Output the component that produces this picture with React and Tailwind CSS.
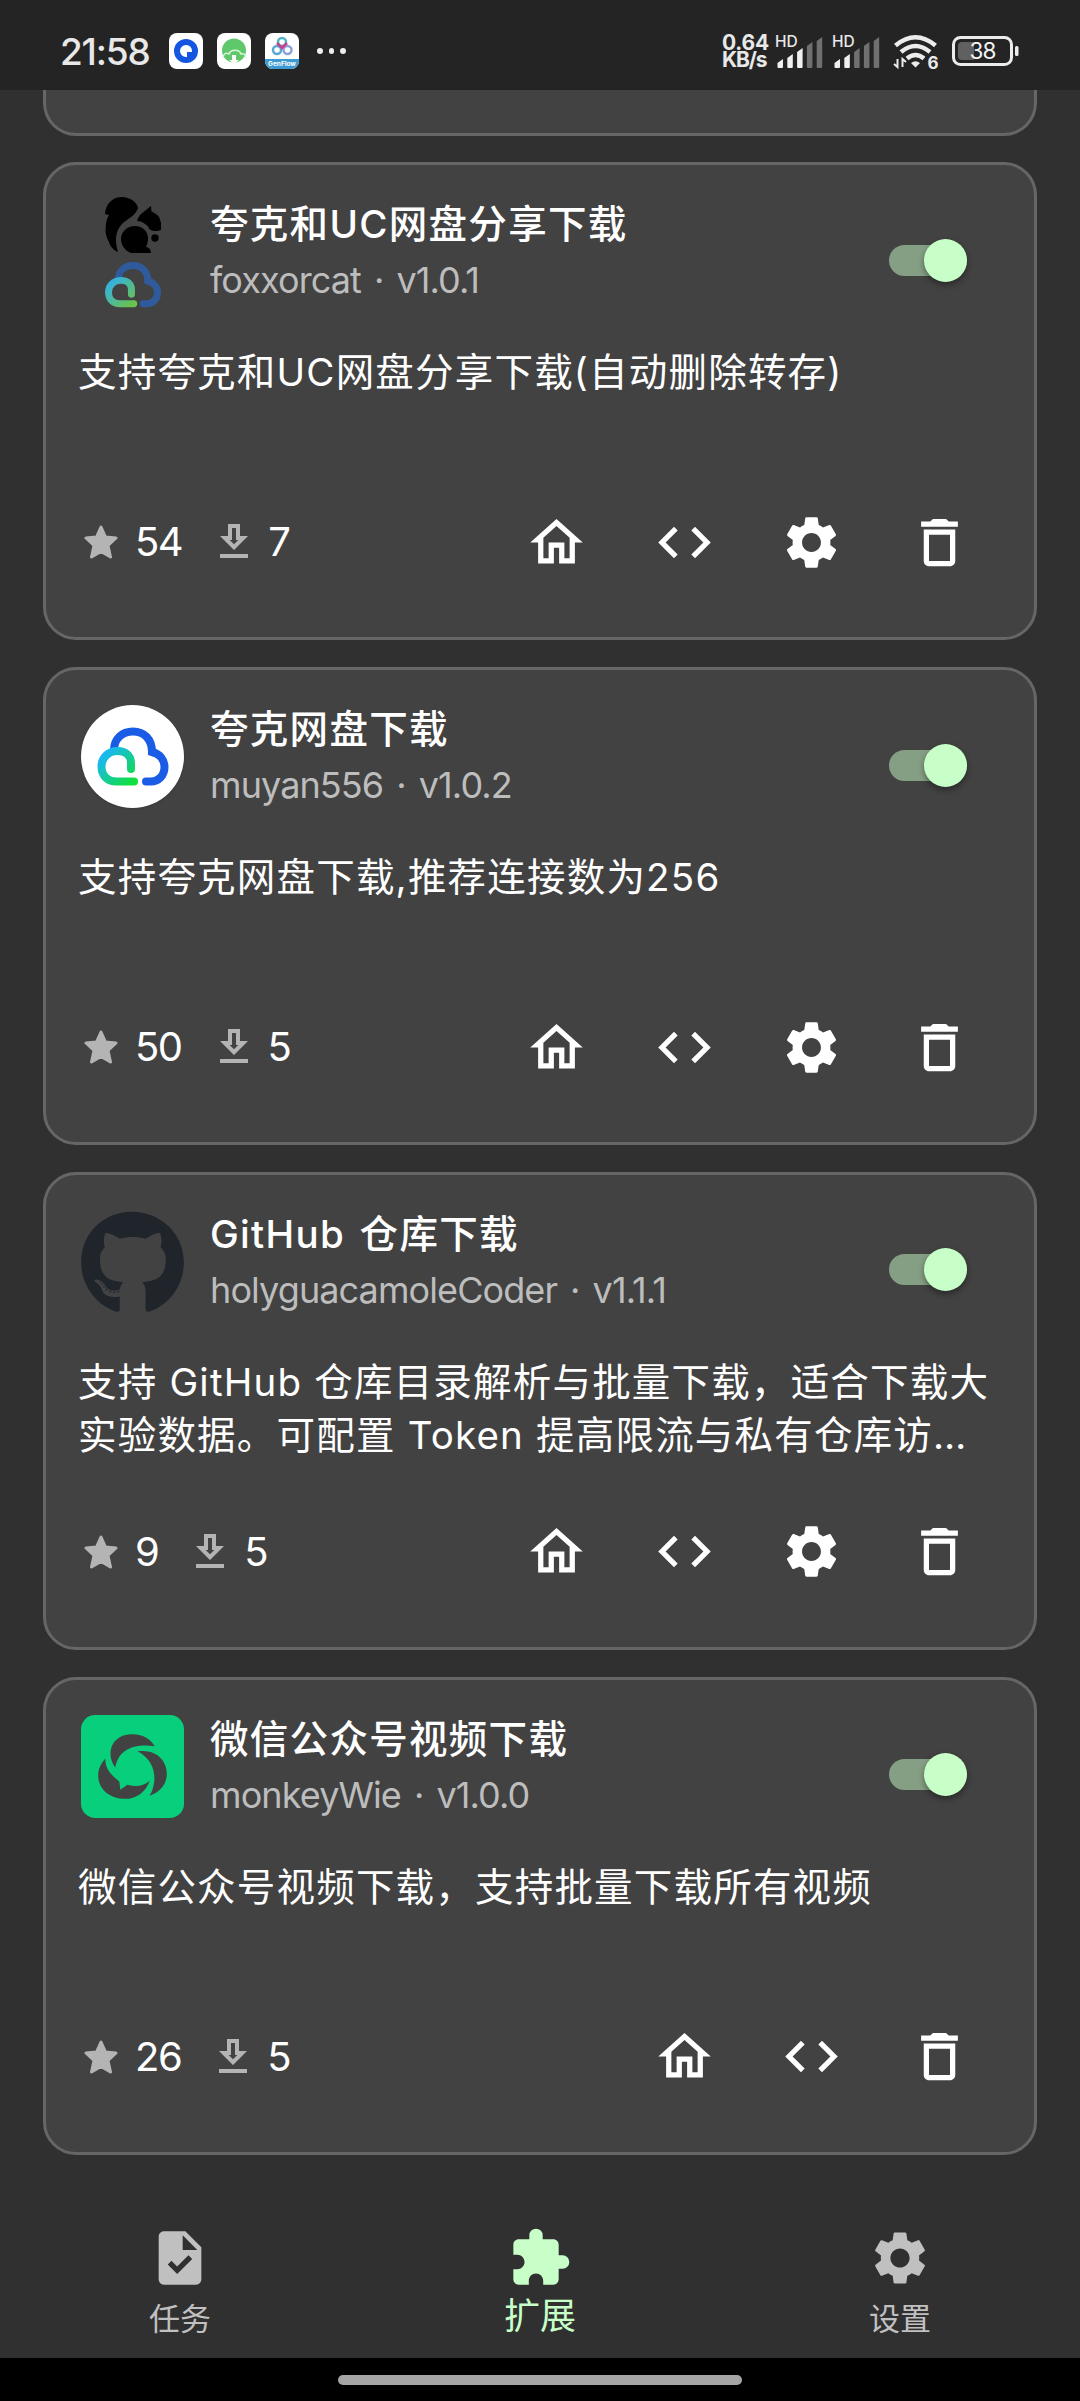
import clsx from "clsx";
import { MdCode, MdExtension, MdOutlineDelete, MdOutlineHome, MdSettings, MdTask } from "react-icons/md";
import { FaGithub } from "react-icons/fa";

const CloudMark = ({ className, blue = "#1a5ce6", cyan = "#18b8f2", green = "#10e03c", stroke = 8, id }) => (
  <svg viewBox="0 0 72 60" preserveAspectRatio="none" className={className} fill="none" strokeLinecap="round">
    <defs>
      <linearGradient id={id} x1="0" y1="0" x2="1" y2="1">
        <stop offset="0.1" stopColor={cyan} />
        <stop offset="1" stopColor={green} />
      </linearGradient>
    </defs>
    <path
      d="M17 23C17 12 25 4.5 36 4.5C47 4.5 55 12 55 25C63 27 67.500 33 67.500 40C67.500 49 61 54.500 54 54.500H49"
      stroke={blue}
      strokeWidth={stroke}
    />
    <path
      d="M34 42V36C34 28 28 24 20.500 24C11 24 4.500 31 4.500 39.500C4.500 49 11 54.500 19 54.500H37"
      stroke={`url(#${id})`}
      strokeWidth={stroke}
    />
  </svg>
);

const QuarkUcAvatar = () => (
  <div className="flex h-full flex-col items-center">
    <svg viewBox="0 0 56 56" className="-mt-[3px] h-14 w-14 shrink-0">
      <path d="M0 17C1 6 8 0 17 0C25 0 32 5 33 11C31 17 26 20 22 23C14 28 11 35 11 43C11 48 12 52 13 55C8 53 5 49 4 45C1 40 0 35 .7 30C1 25 2 21 4 18Z" />
      <path d="M46 9L46.500 14.500C52 17 55 20 55 23C57 27 56.500 30 56 33C51 35 47 34 44 32C44 30 42 28 40 27C38 25 35 24 32 24C33 21 34 19 36 17Z" />
      <path d="M30 29C38 29 43 35 43 41C43 45 42 48 41 50C43 50 46 52 46 56H26C20 54 16 48 16 42C16 35 22 29 30 29Z" />
      <circle cx="50" cy="41" r="3.700" />
    </svg>
    <CloudMark
      id="uc"
      className="mt-[9px] h-[46px] w-14 shrink-0"
      blue="#2f5b9c"
      cyan="#35b2dc"
      green="#6cc24a"
      stroke={9}
    />
  </div>
);

const QuarkAvatar = () => (
  <div className="flex h-full w-full items-center justify-center rounded-full bg-white shadow">
    <CloudMark id="quark" className="h-[60px] w-[72px]" />
  </div>
);

const GithubAvatar = () => <FaGithub className="h-[106px] w-[103px] text-[#20252c]" />;

const WechatAvatar = () => (
  <svg viewBox="0 0 102 102" className="h-full w-full">
    <rect width="102" height="102" rx="14" fill="#07cf7c" />
    <g fill="#424242">
      <path d="M34 52C24 38 30 19 51 19C62 19 69 24 73 31C53 28 37 34 34 52Z" />
      <path d="M56 36C74 33 85 45 85 58C85 68 79 76 68 80C76 66 75 46 56 36Z" />
      <path d="M24 43C24 54 30 59 38 66L39 74L46 69C54 71 61 71 68 65C64 77 54 83 44 83C28 83 17 73 17 60C17 53 20 48 24 43Z" />
    </g>
  </svg>
);

const extensions = [
  {
    title: "夸克和UC网盘分享下载",
    author: "foxxorcat",
    version: "v1.0.1",
    description: "支持夸克和UC网盘分享下载(自动删除转存)",
    stars: 54,
    installs: 7,
    avatar: QuarkUcAvatar,
    configurable: true,
  },
  {
    title: "夸克网盘下载",
    author: "muyan556",
    version: "v1.0.2",
    description: "支持夸克网盘下载,推荐连接数为256",
    stars: 50,
    installs: 5,
    avatar: QuarkAvatar,
    configurable: true,
  },
  {
    title: "GitHub 仓库下载",
    author: "holyguacamoleCoder",
    version: "v1.1.1",
    description:
      "支持 GitHub 仓库目录解析与批量下载，适合下载大实验数据。可配置 Token 提高限流与私有仓库访…",
    stars: 9,
    installs: 5,
    avatar: GithubAvatar,
    configurable: true,
  },
  {
    title: "微信公众号视频下载",
    author: "monkeyWie",
    version: "v1.0.0",
    description: "微信公众号视频下载，支持批量下载所有视频",
    stars: 26,
    installs: 5,
    avatar: WechatAvatar,
    configurable: false,
  },
];

const tabs = [
  { label: "任务", icon: MdTask },
  { label: "扩展", icon: MdExtension, active: true },
  { label: "设置", icon: MdSettings },
];

const Signal = ({ level }) => (
  <svg viewBox="0 0 48 36" className="h-9 w-12 overflow-visible">
    <text x="-1" y="14" fontSize="15.500" fontWeight="500" fill="#e8e8e8">
      HD
    </text>
    {[8, 13, 19, 25, 30].map((h, i) => (
      <path
        key={h}
        d={`M${1.5 + i * 9.8} ${38 - h}l5.500 -4v${h}q0 1-1 1h-3.500q-1 0-1-1z`}
        fill={i < level ? "#f0f0f0" : "#707070"}
      />
    ))}
  </svg>
);

const StatusBar = () => (
  <header className="flex h-[90px] shrink-0 items-center bg-[#242424] pt-3 pl-[60px] text-[#e8e8e8]">
    <span className="w-[109px] text-[37px] leading-none font-medium tracking-[-1.2px]">21:58</span>
    <svg viewBox="0 0 34 36" className="h-9 w-[34px]">
      <rect width="34" height="36" rx="8" fill="#fff" />
      <circle cx="17" cy="18" r="12" fill="#1556e0" />
      <path d="M17 12a6 6 0 1 0 0 12h1v-5h5a6 6 0 0 0-6-7z" fill="#fff" />
    </svg>
    <svg viewBox="0 0 34 36" className="ml-[14px] h-9 w-[34px]">
      <rect width="34" height="36" rx="8" fill="#fff" />
      <circle cx="17" cy="17.500" r="12" fill="#5fc86b" />
      <path d="M6 25c0-4 3-6 6-4c2-5 10-5 12 0c3-1 5 1 5 4" fill="none" stroke="#d8f5da" strokeWidth="1.500" />
      <path d="M15 22h4v5h3l-5 4-5-4h3z" fill="#fff" />
    </svg>
    <svg viewBox="0 0 34 36" className="ml-[14px] h-9 w-[34px]">
      <rect width="34" height="36" rx="8" fill="#fff" />
      <path d="M0 26h34v2a8 8 0 0 1-8 8H8a8 8 0 0 1-8-8z" fill="#3d9bd4" />
      <g fill="none" strokeWidth="2.500">
        <circle cx="17" cy="9" r="4" stroke="#4fb4c8" />
        <circle cx="12" cy="17" r="4" stroke="#5aa8d8" />
        <circle cx="22.500" cy="17" r="4" stroke="#8ba3dc" />
        <path d="M12 10l5 5 5-5" stroke="#c8408a" />
      </g>
      <text x="17" y="33" fontSize="6.500" fontWeight="700" fill="#fff" textAnchor="middle">
        GenFlow
      </text>
    </svg>
    <div className="ml-[18px] flex gap-[6px]">
      {[0, 1, 2].map((i) => (
        <span key={i} className="h-[5.500px] w-[5.500px] rounded-full bg-[#eee]" />
      ))}
    </div>
    <div className="ml-auto flex items-center pr-[61px]">
      <div className="w-[54px] text-[21px] leading-[17.500px] font-bold">
        <div className="-tracking-[0.2px]">0.64</div>
        <div className="-tracking-[1.1px]">KB/s</div>
      </div>
      <Signal level={3} />
      <div className="w-[9px]" />
      <Signal level={2} />
      <svg viewBox="0 0 46 36" className="ml-[12px] h-9 w-[46px] overflow-visible" fill="none" stroke="#ececec">
        <path d="M2.500 12.500Q22.500 -4 42.500 12.500M8 19Q22.500 7 37 19M14 25.500Q22.500 18.500 31 25.500" strokeWidth="4.500" />
        <path d="M18 30Q22.500 26.500 27 30L22.500 34.500Z" fill="#ececec" stroke="none" />
        <path d="M4.500 26v8l-3.500-3M9.500 34v-8l3.500 3" strokeWidth="2" />
        <text x="34.500" y="36" fontSize="17" fontWeight="700" fill="#ececec" stroke="none">
          6
        </text>
      </svg>
      <svg viewBox="0 0 67 30" className="ml-[13px] h-[30px] w-[67px]">
        <rect x="1.500" y="1.500" width="58" height="27" rx="7" fill="none" stroke="#ececec" strokeWidth="3" />
        <path d="M10 6h12v18H10q-4 0-4-4v-10q0-4 4-4z" fill="#606060" />
        <rect x="63" y="10" width="3.500" height="10" rx="1.500" fill="#ececec" />
        <text x="30.500" y="23" fontSize="22.500" letterSpacing="-1" fill="#f4f4f4" textAnchor="middle">
          38
        </text>
      </svg>
    </div>
  </header>
);

const Toggle = () => (
  <button aria-label="toggle" className="flex h-[31px] w-[78px] items-center justify-end rounded-full bg-[#859f85]">
    <span className="h-[43px] w-[43px] shrink-0 rounded-full bg-[#c8ffc8] shadow-[0_3px_6px_rgba(0,0,0,0.4)]" />
  </button>
);

const ExtensionCard = ({ item }) => {
  const Avatar = item.avatar;
  const actions = [MdOutlineHome, MdCode, ...(item.configurable ? [MdSettings] : []), MdOutlineDelete];

  return (
    <article className="h-[478px] shrink-0 rounded-[33px] border-3 border-[#666] bg-[#424242] pt-[31px] pl-[32px]">
      <div className="flex h-32">
        <div className="mt-1 ml-[3px] h-[103px] w-[103px]">
          <Avatar />
        </div>
        <div className="ml-[26px] whitespace-nowrap">
          <h2 className="text-[38.500px] leading-[56px] font-medium tracking-[1.3px] [word-spacing:3px] text-white">
            {item.title}
          </h2>
          <p className="text-[36px] leading-[56px] tracking-[-0.9px] text-[#bdbdbd]">
            {item.author}
            <span className="mx-[13px]">·</span>
            {item.version}
          </p>
        </div>
        <div className="mr-[67px] ml-auto flex items-center">
          <Toggle />
        </div>
      </div>
      <p className="mt-[22px] mr-[32px] h-[106px] text-[38.500px] leading-[53px] tracking-[1.2px] text-white">
        {item.description}
      </p>
      <div className="mt-[58px] flex h-16 items-center text-[40px] text-white">
        <svg
          viewBox="0 0 34 34"
          className="ml-1.5 h-[34px] w-[34px] fill-[#b4b4b4] stroke-[#b4b4b4]"
          strokeWidth="3"
          strokeLinejoin="round"
        >
          <path d="M17 2L21.500 12L32 13L24 20.500L26.500 32L17 26.500L7.500 32L10 20.500L2 13L12.500 12Z" />
        </svg>
        <span className="ml-[17px] tracking-[-1.5px]">{item.stars}</span>
        <svg viewBox="0 0 24 24" className="ml-[28px] h-12 w-12 fill-[#b4b4b4]">
          <path d="M19 9h-4V3H9v6H5l7 7 7-7zm-8 2V5h2v6h1.170L12 13.170 9.830 11H11zm-6 7h14v2H5z" />
        </svg>
        <span className="ml-[10px]">{item.installs}</span>
        <div className="mr-[31px] ml-auto flex">
          {actions.map((Icon, i) => (
            <button key={i} className="flex w-[127.500px] justify-center">
              <Icon className="h-[63px] w-[63px]" />
            </button>
          ))}
        </div>
      </div>
    </article>
  );
};

const BottomNav = () => (
  <nav className="mt-auto flex h-[134px] shrink-0">
    {tabs.map(({ label, icon: Icon, active }) => (
      <button
        key={label}
        className={clsx("flex flex-1 flex-col items-center", active ? "text-[#c8ffc8]" : "text-[#c0c0c0]")}
      >
        <Icon className="mt-[2px] h-16 w-16" />
        <span className={clsx("leading-[44px]", active ? "mt-[4px] text-[36px]" : "mt-[7px] text-[31px]")}>
          {label}
        </span>
      </button>
    ))}
  </nav>
);

const App = () => (
  <div className="flex h-[2401px] w-[1080px] flex-col overflow-hidden bg-[#303030] font-['Inter','Noto_Sans_CJK_SC',sans-serif]">
    <StatusBar />
    <main className="flex flex-col gap-[26.750px] px-[43px]">
      <div className="h-[45.500px] shrink-0 rounded-b-[33px] border-3 border-t-0 border-[#666] bg-[#424242]" />
      {extensions.map((item) => (
        <ExtensionCard key={item.title} item={item} />
      ))}
    </main>
    <BottomNav />
    <footer className="flex h-[43px] shrink-0 justify-center bg-black pt-[17px]">
      <div className="h-[10px] w-[404px] rounded-full bg-[#a5a5a5]" />
    </footer>
  </div>
);

export default App;
